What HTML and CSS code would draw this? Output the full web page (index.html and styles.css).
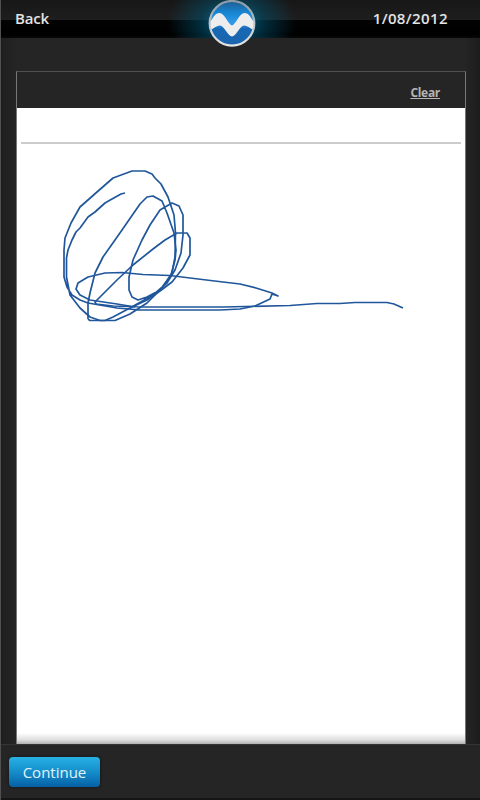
FILE: index.html
```html
<!DOCTYPE html>
<html lang="en">
  <head>
    <meta charset="UTF-8" />
    <meta name="viewport" content="width=device-width, initial-scale=1.0" />
    <title>Signature</title>
    <link rel="stylesheet" href="styles.css">
  </head>
  <body>
    <div class="app">
      <!-- Top bar -->
      <header class="header">
        <a class="back">Back</a>
        <span class="date">1/08/2012</span>
        <svg class="logo" width="50" height="50" viewBox="0 0 50 50">
          <defs>
            <linearGradient id="ball" x1="0" y1="0" x2="0" y2="1">
              <stop offset="0" stop-color="#225b8c" />
              <stop offset="0.25" stop-color="#1784d0" />
              <stop offset="0.5" stop-color="#2f9bea" />
              <stop offset="0.62" stop-color="#1768b4" />
              <stop offset="1" stop-color="#1b65ad" />
            </linearGradient>
            <linearGradient id="rim" x1="0" y1="0" x2="0" y2="1">
              <stop offset="0" stop-color="#8b9ba8" />
              <stop offset="0.5" stop-color="#b9c3cb" />
              <stop offset="1" stop-color="#e6e6e6" />
            </linearGradient>
            <clipPath id="disc"><circle cx="25" cy="23.3" r="21.5" /></clipPath>
          </defs>
          <circle cx="25" cy="23.3" r="22.3" fill="url(#ball)" stroke="url(#rim)" stroke-width="2.2" />
          <path clip-path="url(#disc)" fill="#ededed" d="M3 22C6 18 8 13 12.500 13C17.500 13 21 24 25 25.500C29 24 32.500 13 37.500 13C42 13 44 18 47 22V31C44 28 40 25.500 37 25.500C33 25.500 29 36.500 25 36.500C21 36.500 17 25.500 13 25.500C10 25.500 6 28 3 31Z" />
        </svg>
      </header>

      <!-- Signature area -->
      <main class="content">
        <section class="pad">
          <div class="pad-bar"><a class="clear">Clear</a></div>
          <div class="paper">
            <svg class="signature" width="448" height="636" viewBox="17 108 448 636">
              <path d="M125 193L121 194L112 199L105 203L95 212L88 217L80 228L76 232L72 240L68 250L66.500 258V277L70 295L80 308L90 317L100 320.500H115L130 314L147 303L163 287L172 273L175 257L175.500 233L174 215L168 197L161 184L155 178L152 174L145 171H132L113 178L97 192L80 207L71 223L65 238L64 250V277L67 287L72 295L80 300L88 303L117 308L140 310H220L240 309L255 306L270 299L272 294L278 296L272 293L256 288L240 284L223 282L190 278L170 275.500L143 274.500L122 272.500L105 273L88 277L78 283L76 289L80 295L90 300L117 304L135 307" />
              <path d="M88 319V303L90 293L95 273L103 257L115 240L122 230L140 204L147 197L153 196L162 201L167 213L174 233L176 250L175 260L171 275L160 290L147 297L138 300L132 297L129 290V277L133 260L142 240L150 225L160 210L172 203L179 206L183 215V235L181 253L175 270L167 283L153 295L130 308L113 317L105 320.500H90L88 319" />
              <path d="M130 308L147 300L160 291L172 282L183 268L190 255V238L187 233L177 233L165 240L153 249L133 265L117 280L100 297L95 302L96 304L113 306L143 307L200 307L223 307L290 305.500L317 303.500L340 303.500L355 302.500H387L394 304L403 308" />
            </svg>
          </div>
        </section>
      </main>

      <!-- Bottom bar -->
      <footer class="footer">
        <button class="continue" type="button">Continue</button>
      </footer>
    </div>
  </body>
</html>
```
FILE: styles.css
```css
* {
  box-sizing: border-box;
}

body {
  margin: 0;
  background: #252525;
  font-family: "Open Sans", "Noto Sans", sans-serif;
}

.app {
  display: flex;
  flex-direction: column;
  height: 800px;
  border-left: 1px solid #505050;
  overflow: hidden;
}

/* Top bar */
.header {
  position: relative;
  display: flex;
  justify-content: space-between;
  height: 38px;
  padding: 7px 32px 0 14px;
  background:
    radial-gradient(ellipse 64px 46px at 231px 22px, rgba(0, 125, 165, 0.85), rgba(0, 85, 115, 0.5) 50%, transparent),
    linear-gradient(#171717, #1e1e1e 20px, #030303 20px, #000 35px, #080808);
  color: #e4e4e4;
  font-size: 15px;
  font-weight: 600;
  line-height: 22px;
}

.back {
  letter-spacing: -0.2px;
}

.date {
  letter-spacing: 0.4px;
}

.logo {
  position: absolute;
  top: 0;
  left: 206px;
}

/* Signature area */
.content {
  flex: 1;
  padding: 33px 14px 0 15px;
  background: linear-gradient(90deg, #1e1e1e, #252525 15px, #252525 464px, #1c1c1e);
}

.pad {
  display: flex;
  flex-direction: column;
  height: 100%;
  border: 1px solid #666;
  border-color: #505050 #777 #777;
  border-bottom: 0;
}

.pad-bar {
  height: 36px;
  padding: 13px 25px 0 0;
  background: #252525;
  font-size: 12px;
  line-height: 16px;
  text-align: right;
}

.clear {
  color: #b5b5b5;
  font-weight: 700;
  letter-spacing: -0.3px;
  text-decoration: underline;
}

.paper {
  position: relative;
  flex: 1;
  padding: 34px 4px 0;
  background: linear-gradient(#fff calc(100% - 11px), #ddd calc(100% - 4px), #b0b0b0);
}

.paper::before {
  content: "";
  display: block;
  height: 2px;
  background: #ccc;
}

.signature {
  position: absolute;
  top: 0;
  left: 0;
  fill: none;
  stroke: #20579b;
  stroke-width: 1.7;
  stroke-linejoin: round;
}

/* Bottom bar */
.footer {
  height: 56px;
  padding: 12px 8px;
  border-top: 1px solid #353535;
  border-bottom: 2px solid #151515;
  background: #252525;
}

.continue {
  display: block;
  width: 91px;
  height: 30px;
  padding: 0;
  border: 0;
  border-radius: 4px;
  background: linear-gradient(#27b1e4, #1389c8 55%, #0660a5);
  box-shadow: 0 0 3px #111;
  color: #e4f3fb;
  font-family: inherit;
  font-size: 15px;
  line-height: 30px;
}
```
